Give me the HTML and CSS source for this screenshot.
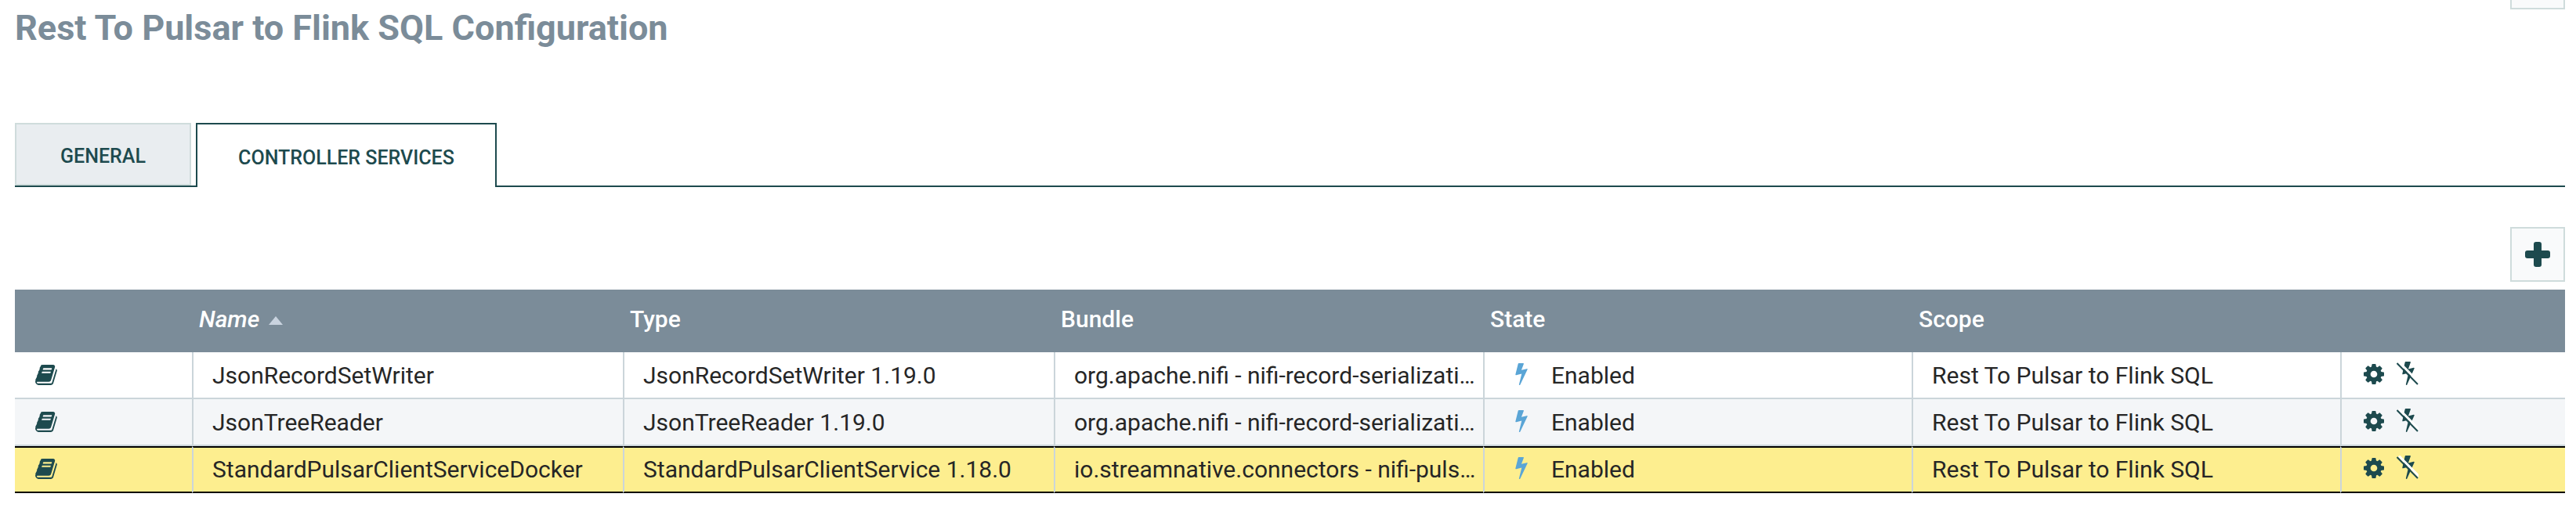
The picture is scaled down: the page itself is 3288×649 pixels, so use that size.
FILE: index.html
```html
<!DOCTYPE html>
<html lang="en">
<head>
    <meta charset="UTF-8">
    <title>Rest To Pulsar to Flink SQL Configuration</title>
    <link rel="stylesheet" href="styles.css">
</head>
<body>
    <svg class="defs" width="0" height="0">
        <symbol id="book" viewBox="60 128 1680 1536" preserveAspectRatio="none"><path d="M1703 478q40 57 18 129l-275 906q-19 64-76.500 107.500t-122.500 43.500h-923q-77 0-148.500-53.500t-99.500-131.500q-24-67-2-127 0-4 3-27t4-37q1-8-3-21.500t-3-19.500q2-11 8-21t16.500-23.500 16.500-23.500q23-38 45-91.500t30-91.500q3-10 .5-30t-.5-28q3-11 17-28t17-23q21-36 42-92t25-90q1-9-2.500-32t.5-28q4-13 22-30.500t22-22.500q19-26 42.500-84.500t27.500-96.500q1-8-3-25.500t-2-26.500q2-8 9-18t18-23 17-21q8-12 16.500-30.500t15-35 16-36 19.500-32 26.500-23.500 36-11.500 47.500 5.500l-1 3q38-9 51-9h761q74 0 114 56t18 130l-274 906q-36 119-71.500 153.500t-128.500 34.500h-869q-27 0-38 15-11 16-1 43 24 70 144 70h923q29 0 56-15.500t35-41.500l300-987q7-22 5-57 38 15 59 43zm-1064 2q-4 13 2 22.500t20 9.500h608q13 0 25.500-9.500t16.500-22.500l21-64q4-13-2-22.500t-20-9.500h-608q-13 0-25.500 9.500t-16.500 22.500zm-83 256q-4 13 2 22.500t20 9.500h608q13 0 25.500-9.500t16.500-22.500l21-64q4-13-2-22.500t-20-9.500h-608q-13 0-25.500 9.500t-16.500 22.500z"/></symbol>
        <symbol id="bolt" viewBox="430 128 930 1664" preserveAspectRatio="none"><path d="M1333 566q18 20 7 44l-540 1157q-13 25-42 25-4 0-14-2-17-5-25.500-19t-4.500-30l197-808-406 101q-4 1-12 1-18 0-31-11-18-15-13-39l201-825q4-14 16-23t28-9h328q19 0 32 12.500t13 29.500q0 8-5 18l-171 463 396-98q8-2 12-2 19 0 34 15z"/></symbol>
        <symbol id="cog" viewBox="128 128 1536 1536"><path d="M1152 896q0-106-75-181t-181-75-181 75-75 181 75 181 181 75 181-75 75-181zm512-109v222q0 12-8 23t-20 13l-185 28q-19 54-39 91 35 50 107 138 10 12 10 25t-9 23q-27 37-99 108t-94 71q-12 0-26-9l-138-108q-44 23-91 38-16 136-29 186-7 28-36 28h-222q-14 0-24.500-8.500t-11.500-21.500l-28-184q-49-16-90-37l-141 107q-10 9-25 9-14 0-25-11-126-114-165-168-7-10-7-23 0-12 8-23 15-21 51-66.500t54-70.500q-27-50-41-99l-183-27q-13-2-21-12.500t-8-23.500v-222q0-12 8-23t19-13l186-28q14-46 39-92-40-57-107-138-10-12-10-24 0-10 9-23 26-36 98.500-107.500t94.500-71.500q13 0 26 10l138 107q44-23 91-38 16-136 29-186 7-28 36-28h222q14 0 24.500 8.500t11.500 21.500l28 184q49 16 90 37l142-107q9-9 24-9 13 0 25 10 129 119 165 170 7 8 7 22 0 12-8 23-15 21-51 66.500t-54 70.500q26 50 41 98l183 28q13 2 21 12.500t8 23.500z"/></symbol>
        <symbol id="nobolt" viewBox="0 0 28 31">
            <use href="#bolt" x="7" y="0" width="16" height="30"/>
            <line class="cut" x1="3" y1="0.500" x2="29" y2="27"/>
            <line class="slash" x1="0.500" y1="2" x2="27" y2="29"/>
        </symbol>
    </svg>

    <header class="page-head">
        <h1>Rest To Pulsar to Flink SQL Configuration</h1>
        <button class="icon-btn top-btn"></button>
    </header>

    <nav class="tabs">
        <div class="tab">GENERAL</div>
        <div class="tab active">CONTROLLER SERVICES</div>
    </nav>

    <div class="toolbar">
        <button class="icon-btn">
            <svg class="plus" viewBox="0 0 32 32"><rect x="11" y="0" width="10" height="32" rx="3"/><rect x="0" y="11" width="32" height="10" rx="3"/></svg>
        </button>
    </div>

    <table class="grid">
        <thead>
            <tr>
                <th class="c-icon"></th>
                <th class="c-wide sorted">Name <span class="sort-up"></span></th>
                <th class="c-wide">Type</th>
                <th class="c-bundle">Bundle</th>
                <th class="c-mid">State</th>
                <th class="c-mid">Scope</th>
                <th class="c-actions"></th>
            </tr>
        </thead>
        <tbody>
            <tr>
                <td><svg class="ico book"><use href="#book"/></svg></td>
                <td>JsonRecordSetWriter</td>
                <td>JsonRecordSetWriter 1.19.0</td>
                <td class="bundle">org.apache.nifi - nifi-record-serialization-services-nar</td>
                <td><svg class="ico bolt"><use href="#bolt"/></svg><span class="state">Enabled</span></td>
                <td>Rest To Pulsar to Flink SQL</td>
                <td class="actions"><svg class="ico cog"><use href="#cog"/></svg><svg class="ico nobolt"><use href="#nobolt"/></svg></td>
            </tr>
            <tr class="odd">
                <td><svg class="ico book"><use href="#book"/></svg></td>
                <td>JsonTreeReader</td>
                <td>JsonTreeReader 1.19.0</td>
                <td class="bundle">org.apache.nifi - nifi-record-serialization-services-nar</td>
                <td><svg class="ico bolt"><use href="#bolt"/></svg><span class="state">Enabled</span></td>
                <td>Rest To Pulsar to Flink SQL</td>
                <td class="actions"><svg class="ico cog"><use href="#cog"/></svg><svg class="ico nobolt"><use href="#nobolt"/></svg></td>
            </tr>
            <tr class="selected">
                <td><svg class="ico book"><use href="#book"/></svg></td>
                <td>StandardPulsarClientServiceDocker</td>
                <td>StandardPulsarClientService 1.18.0</td>
                <td class="bundle">io.streamnative.connectors - nifi-pulsar-client-service-nar</td>
                <td><svg class="ico bolt"><use href="#bolt"/></svg><span class="state">Enabled</span></td>
                <td>Rest To Pulsar to Flink SQL</td>
                <td class="actions"><svg class="ico cog"><use href="#cog"/></svg><svg class="ico nobolt"><use href="#nobolt"/></svg></td>
            </tr>
        </tbody>
    </table>
</body>
</html>
```

FILE: styles.css
```css
body { margin: 0; padding: 0 14px 0 19px; background: #fff; font-family: Roboto, sans-serif; color: #262626; }
.defs { display: block; }
.page-head { display: flex; justify-content: space-between; height: 157px; }
h1 { margin: 10px 0 0; font-size: 45px; line-height: 52px; font-weight: 700; color: #7b8c99; }
.icon-btn { width: 70px; height: 70px; padding: 0; border: 2px solid #cfdcdc; background: #f9fafb; display: flex; align-items: center; justify-content: center; }
.top-btn { margin-top: -58px; }
.tabs { display: flex; gap: 6px; height: 82px; box-sizing: border-box; border-bottom: 2px solid #1d4a4e; }
.tab { display: flex; align-items: center; justify-content: center; box-sizing: border-box; padding-top: 5px; font-size: 25px; font-weight: 500; color: #1d4a4e; }
.tab { width: 225px; height: 80px; background: #e9edf0; border: 2px solid #cfdcdc; }
.tab.active { width: 384px; height: 82px; background: #fff; border: 2px solid #1d4a4e; border-bottom: none; }
.toolbar { display: flex; justify-content: flex-end; margin-top: 51px; height: 70px; }
.plus { width: 32px; height: 32px; fill: #1d4a4e; }
.grid { margin-top: 10px; width: 3255px; table-layout: fixed; border-collapse: separate; border-spacing: 0; font-size: 30px; line-height: 34px; }
.grid th { height: 80px; padding: 0 0 4px 9px; box-sizing: border-box; background: #7b8c99; color: #fff; text-align: left; font-weight: 500; }
.c-icon { width: 226px; }
.c-wide { width: 550px; }
.c-bundle { width: 548px; }
.c-mid { width: 547px; }
.c-actions { width: 287px; }
th.sorted { font-style: italic; }
.sort-up { display: inline-block; width: 0; height: 0; margin-left: 4px; vertical-align: 3px; border-left: 9px solid transparent; border-right: 9px solid transparent; border-bottom: 11px solid #c9d3df; }
.grid td { height: 60px; padding: 1px 12px 0 24px; box-sizing: border-box; border-left: 2px solid #cbd5da; border-bottom: 2px solid #cbd5da; background: #fff; white-space: nowrap; overflow: hidden; text-overflow: ellipsis; vertical-align: middle; }
.grid td:first-child { border-left: none; padding-left: 26px; }
.grid td.bundle { padding-right: 3px; }
.odd td { background: #f4f6f8; }
.selected td { background: #fdee8f; border-top: 2px solid #000; border-bottom: 2px solid #000; padding-top: 0; padding-bottom: 1px; }
.ico { vertical-align: middle; margin-bottom: 5px; fill: #1d4a4e; }
.book { width: 28px; height: 26px; }
.bolt { width: 16px; height: 28px; fill: #5aa5d6; margin-left: 15px; margin-right: 30px; }
.state { vertical-align: middle; }
.grid td.actions { padding-left: 28px; }
.cog { width: 26px; height: 26px; margin-right: 16px; }
.nobolt { width: 28px; height: 31px; }
.slash { stroke: #1d4a4e; stroke-width: 2; }
.cut { stroke: #fff; stroke-width: 3; }
.odd .cut { stroke: #f4f6f8; }
.selected .cut { stroke: #fdee8f; }
```
